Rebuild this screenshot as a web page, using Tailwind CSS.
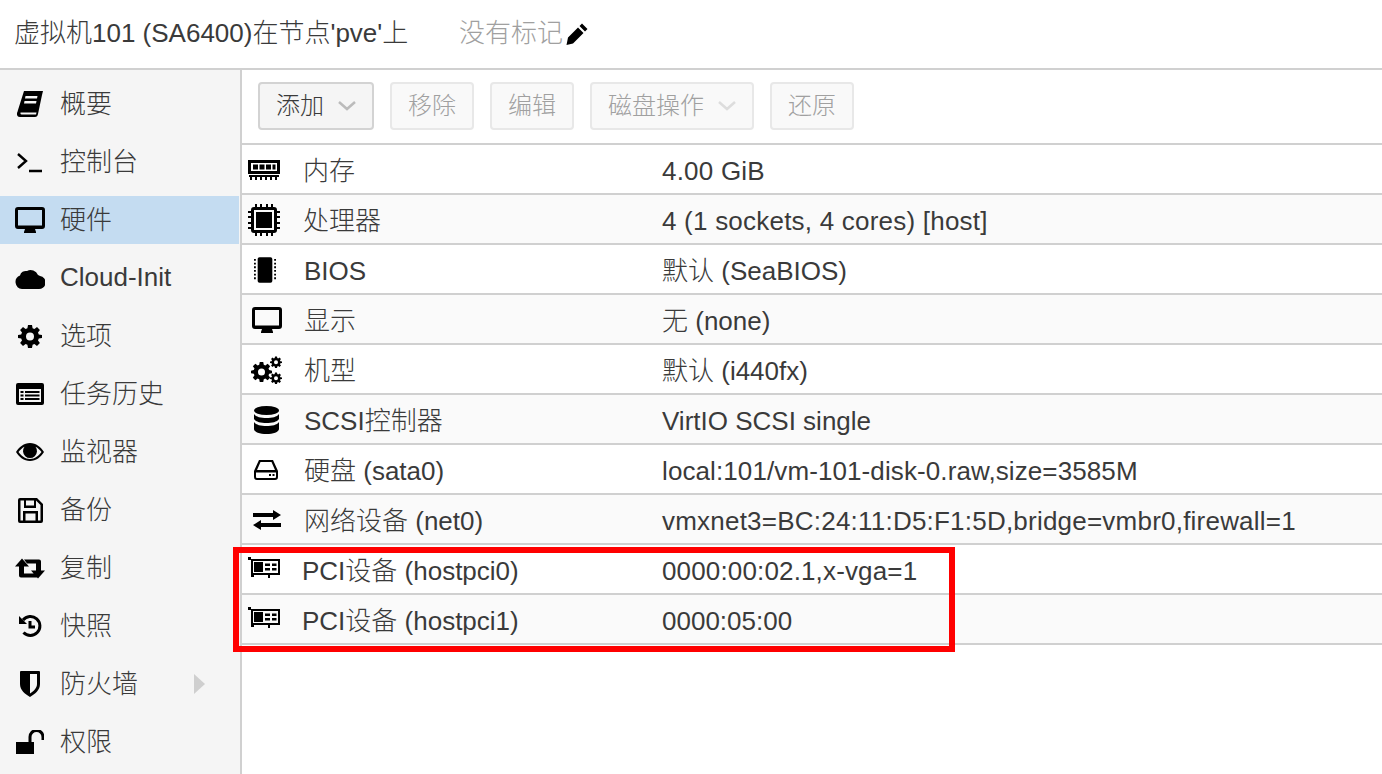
<!DOCTYPE html>
<html lang="zh-CN">
<head>
  <meta charset="UTF-8" />
  <title>虚拟机101</title>
  <script src="https://cdn.jsdelivr.net/npm/@tailwindcss/browser@4"></script>
</head>
<body class="bg-white">
  <svg class="hidden" width="0" height="0">
    <symbol id="gear" viewBox="0 0 24 24"><path fill-rule="evenodd" d="M10 1h4l.6 3.200 1.800.8L19 3.100 21.900 6 20 8.600l.8 1.800L24 11v3l-3.200.6-.8 1.800 1.900 2.600L19 21.900l-2.600-1.900-1.800.8L14 24h-4l-.6-3.200-1.800-.8L5 21.900 2.100 19 4 16.400l-.8-1.800L0 14v-3l3.200-.6.8-1.800L2.100 6 5 3.100 7.600 5l1.800-.8zM12 8.500a4 4 0 1 0 0 8 4 4 0 0 0 0-8z"/></symbol>
    <symbol id="desktop" viewBox="0 0 30 26"><path fill-rule="evenodd" d="M3 0h24a3 3 0 0 1 3 3v16a3 3 0 0 1-3 3h-7l1 3v1H9v-1l1-3H3a3 3 0 0 1-3-3V3a3 3 0 0 1 3-3zm0 3v15.500h24V3z"/></symbol>
    <symbol id="pci" viewBox="0 0 32 24"><path fill-rule="evenodd" d="M0 0h3v2h29v16H22v3h-2v-3H6v2H3V3H0zM5 4v12h25V4z"/><path d="M6 5h9v10H6zM17 6.500h5v2.500h-5zM24 6.500h4.500v2.500H24zM17 11h5v2.500h-5zM24 11h4.500v2.500H24z"/></symbol>
  </svg>

  <div class="relative h-[774px] w-[1382px] overflow-hidden font-['Liberation_Sans','Noto_Sans_CJK_SC',sans-serif] font-light text-[26px] text-[#3a3a3a]">
    <header class="flex h-[70px] items-center border-b-2 border-[#d0d0d0] pl-[14px] pb-[1px]">
      <span class="w-[445px]">虚拟机101 (SA6400)在节点'pve'上</span>
      <span class="text-[#a0a0a0]">没有标记</span>
      <svg class="ml-[2px] h-[24px] w-[24px]" viewBox="0 0 24 24"><path d="M17 1.500l5.500 5.500-2.500 2.500L14.500 4zM13 5.500L18.500 11 8 21.500 1.500 23 3 15.500z"/></svg>
    </header>

    <div class="flex h-[704px]">
      <nav class="w-[242px] shrink-0 border-r-2 border-[#d0d0d0] bg-[#f5f5f5] pt-[5px]">
        <a class="flex h-[58px] items-center">
          <span class="flex w-[60px] justify-center"><svg class="h-[28px] w-[28px]" viewBox="0 0 28 28"><path fill-rule="evenodd" d="M8 1h19l-1 4-4 19q-.5 3-3 3H4q-3.500 0-3-4 .5-1 1-3zM9.500 6l-.5 2.500h12L21.500 6zM8.500 11l-.5 2.500h12l.5-2.500zM4.500 22.500q-.5 2 1 2h14.500l.5-2z"/></svg></span>
          <span>概要</span>
        </a>
        <a class="flex h-[58px] items-center">
          <span class="flex w-[60px] justify-center"><svg class="h-[24px] w-[28px]" viewBox="0 0 28 24" fill="none" stroke="black" stroke-width="2.400"><path d="M2 4l8 7-8 7M13 21h13"/></svg></span>
          <span>控制台</span>
        </a>
        <a class="my-[5px] mr-[1px] flex h-[48px] items-center bg-[#c4dcf1]">
          <span class="flex w-[60px] justify-center"><svg class="h-[26px] w-[30px]"><use href="#desktop"/></svg></span>
          <span>硬件</span>
        </a>
        <a class="flex h-[58px] items-center">
          <span class="flex w-[60px] justify-center"><svg class="h-[24px] w-[30px]" viewBox="0 0 30 22"><path d="M7 22a7 7 0 0 1-2-13.500A6 6 0 0 1 12 4a8 8 0 0 1 11 4 6 6 0 0 1 2 1 6.500 6.500 0 0 1-2 13z"/></svg></span>
          <span class="pb-[2px]">Cloud-Init</span>
        </a>
        <a class="flex h-[58px] items-center">
          <span class="flex w-[60px] justify-center"><svg class="h-[24px] w-[24px]"><use href="#gear"/></svg></span>
          <span>选项</span>
        </a>
        <a class="flex h-[58px] items-center">
          <span class="flex w-[60px] justify-center"><svg class="h-[22px] w-[28px]" viewBox="0 0 28 22"><path fill-rule="evenodd" d="M2 0h24a2 2 0 0 1 2 2v18a2 2 0 0 1-2 2H2a2 2 0 0 1-2-2V2a2 2 0 0 1 2-2zM3 6v13h22V6z"/><path d="M4.500 8h3v2h-3zM9 8h14.500v2H9zM4.500 11.500h3v2h-3zM9 11.500h14.500v2H9zM4.500 15h3v2h-3zM9 15h14.500v2H9z"/></svg></span>
          <span>任务历史</span>
        </a>
        <a class="flex h-[58px] items-center">
          <span class="flex w-[60px] justify-center"><svg class="h-[18px] w-[28px]" viewBox="0 0 28 18"><path fill-rule="evenodd" d="M14 0c6 0 11 4 14 9-3 5-8 9-14 9S3 14 0 9c3-5 8-9 14-9zM2.500 9c2.500 3.500 6.500 7 11.500 7s9-3.500 11.500-7c-1.500-2-3.500-4-6-5.300a7 7 0 1 1-11 0C6 5 4 7 2.500 9z"/></svg></span>
          <span>监视器</span>
        </a>
        <a class="flex h-[58px] items-center">
          <span class="flex w-[60px] justify-center"><svg class="h-[25px] w-[25px]" viewBox="0 0 25 25"><path fill-rule="evenodd" d="M2 0h17l6 6v17a2 2 0 0 1-2 2H2a2 2 0 0 1-2-2V2a2 2 0 0 1 2-2zM2.500 2.500v20H5V13h15v9.500h2.500V7L18 2.500V10H6V2.500zM8 2.500v5h8v-5zM7.500 15.500v7h10v-7z"/></svg></span>
          <span>备份</span>
        </a>
        <a class="flex h-[58px] items-center">
          <span class="flex w-[60px] justify-center"><svg class="h-[23px] w-[30px]" viewBox="0 0 30 20"><path d="M7 0l7 8H9v7h10l3.500 4H6a2 2 0 0 1-2-2V8H0zM9 1h15a2 2 0 0 1 2 2v9h4l-7 8-7-8h5V5h-9z"/></svg></span>
          <span>复制</span>
        </a>
        <a class="flex h-[58px] items-center">
          <span class="flex w-[60px] justify-center"><svg class="h-[24px] w-[24px]" viewBox="0 0 24 24" fill="none" stroke="black" stroke-width="3"><path d="M5.500 18.500A9.500 9.500 0 1 0 5 6M12 7v6h5"/><path d="M1 2l8 8H1z" fill="black" stroke="none"/></svg></span>
          <span>快照</span>
        </a>
        <a class="flex h-[58px] items-center">
          <span class="flex w-[60px] justify-center"><svg class="h-[26px] w-[20px]" viewBox="0 0 20 26"><path fill-rule="evenodd" d="M1 0h18a1 1 0 0 1 1 1v12c0 6-5 10-10 13C5 23 0 19 0 13V1a1 1 0 0 1 1-1zM10 3v19.500c4-2.500 7-5.500 7-9.500V3z"/></svg></span>
          <span class="w-[133px]">防火墙</span>
          <svg class="h-[20px] w-[12px]" viewBox="0 0 12 20" fill="#cfcfcf"><path d="M1 0l11 10L1 20z"/></svg>
        </a>
        <a class="flex h-[58px] items-center">
          <span class="flex w-[60px] justify-center"><svg class="h-[24px] w-[28px]" viewBox="0 0 28 24"><path d="M0 12h18v12H0z"/><path d="M14 12V7a6.500 6.500 0 0 1 13 0v3" fill="none" stroke="black" stroke-width="3"/></svg></span>
          <span>权限</span>
        </a>
      </nav>

      <main class="flex-1">
        <div class="flex h-[75px] items-center gap-4 border-b-2 border-[#d0d0d0] pl-[16px] pb-[1px] text-[24px] text-[#a0a0a0]">
          <button class="flex h-[48px] w-[116px] items-center rounded-[4px] border-2 border-[#d3d3d3] bg-[#f5f5f5] pl-[16px] font-light text-[#3a3a3a]">添加<svg class="ml-[14px] h-[10px] w-[18px]" viewBox="0 0 18 10" fill="none" stroke="#bbb" stroke-width="2.500"><path d="M1 1l8 7 8-7"/></svg></button>
          <button class="h-[48px] w-[84px] rounded-[4px] border-2 border-[#e8e8e8] bg-[#f9f9f9] font-light">移除</button>
          <button class="h-[48px] w-[84px] rounded-[4px] border-2 border-[#e8e8e8] bg-[#f9f9f9] font-light">编辑</button>
          <button class="flex h-[48px] w-[164px] items-center rounded-[4px] border-2 border-[#e8e8e8] bg-[#f9f9f9] pl-[16px] font-light">磁盘操作<svg class="ml-[14px] h-[10px] w-[18px]" viewBox="0 0 18 10" fill="none" stroke="#ddd" stroke-width="2.500"><path d="M1 1l8 7 8-7"/></svg></button>
          <button class="h-[48px] w-[84px] rounded-[4px] border-2 border-[#e8e8e8] bg-[#f9f9f9] font-light">还原</button>
        </div>

        <div>
          <div class="grid h-[50px] grid-cols-[60px_360px_1fr] items-center border-b-2 border-[#d0d0d0] pt-[4px]">
            <span class="flex justify-center pb-[2px] pr-[16px]"><svg class="h-[20px] w-[32px]" viewBox="0 0 32 20"><path fill-rule="evenodd" d="M0 0h32v14H0zM3 3v8h26V3z"/><path d="M5 4.500h5v5H5zM11.500 4.500h5v5h-5zM18 4.500h5v5h-5zM24.500 4.500h3v5h-3zM1 15h30v2H1z"/><path d="M2 17h2v3H2zM7 17h2v3H7zM12 17h2v3h-2zM17 17h2v3h-2zM22 17h2v3h-2zM27 17h2v3h-2z"/></svg></span>
            <span class="pl-[1px]">内存</span><span class="tracking-[0.22px]">4.00 GiB</span>
          </div>
          <div class="grid h-[50px] grid-cols-[60px_360px_1fr] items-center border-b-2 border-[#d0d0d0] bg-[#fafafa] pt-[4px]">
            <span class="flex justify-center pb-[2px] pr-[16px]"><svg class="h-[32px] w-[32px]" viewBox="0 0 32 32"><path fill-rule="evenodd" d="M6 3h20a3 3 0 0 1 3 3v20a3 3 0 0 1-3 3H6a3 3 0 0 1-3-3V6a3 3 0 0 1 3-3zM6 6v20h20V6z"/><path d="M8 8h16v16H8zM7 0h2v3H7zM12 0h2v3h-2zM18 0h2v3h-2zM23 0h2v3h-2zM7 29h2v3H7zM12 29h2v3h-2zM18 29h2v3h-2zM23 29h2v3h-2zM0 7h3v2H0zM0 12h3v2H0zM0 18h3v2H0zM0 23h3v2H0zM29 7h3v2h-3zM29 12h3v2h-3zM29 18h3v2h-3zM29 23h3v2h-3z"/></svg></span>
            <span class="pl-[1px]">处理器</span><span class="tracking-[0.22px]">4 (1 sockets, 4 cores) [host]</span>
          </div>
          <div class="grid h-[50px] grid-cols-[60px_360px_1fr] items-center border-b-2 border-[#d0d0d0] pt-[4px]">
            <span class="flex justify-center pb-[2px] pr-[15px]"><svg class="h-[28px] w-[22px]" viewBox="0 0 24 28"><rect x="4" width="16" height="28" rx="2"/><path d="M0 2h2v2H0zM0 6h2v2H0zM0 10h2v2H0zM0 14h2v2H0zM0 18h2v2H0zM0 22h2v2H0zM22 2h2v2h-2zM22 6h2v2h-2zM22 10h2v2h-2zM22 14h2v2h-2zM22 18h2v2h-2zM22 22h2v2h-2z"/></svg></span>
            <span class="pl-[2px]">BIOS</span><span>默认 (SeaBIOS)</span>
          </div>
          <div class="grid h-[50px] grid-cols-[60px_360px_1fr] items-center border-b-2 border-[#d0d0d0] bg-[#fafafa] pt-[4px]">
            <span class="flex justify-center pb-[2px] pr-[10px]"><svg class="h-[26px] w-[30px]"><use href="#desktop"/></svg></span>
            <span class="pl-[2px]">显示</span><span>无 (none)</span>
          </div>
          <div class="grid h-[50px] grid-cols-[60px_360px_1fr] items-center border-b-2 border-[#d0d0d0] pt-[4px]">
            <span class="flex justify-center pb-[2px] pr-[11px]"><span class="relative h-[28px] w-[31px]"><svg class="absolute left-0 top-[5px] h-[21px] w-[21px]"><use href="#gear"/></svg><svg class="absolute right-0 top-0 h-[12px] w-[12px]"><use href="#gear"/></svg><svg class="absolute right-0 bottom-0 h-[12px] w-[12px]"><use href="#gear"/></svg></span></span>
            <span class="pl-[2px]">机型</span><span>默认 (i440fx)</span>
          </div>
          <div class="grid h-[50px] grid-cols-[60px_360px_1fr] items-center border-b-2 border-[#d0d0d0] bg-[#fafafa] pt-[4px]">
            <span class="flex justify-center pb-[2px] pr-[11px]"><svg class="h-[28px] w-[25px]" viewBox="0 0 25 28"><ellipse cx="12.500" cy="4.500" rx="12.500" ry="4.500"/><path d="M0 8c2 3 7 4 12.500 4S23 11 25 8v5c-2 3-7 4-12.500 4S2 16 0 13zM0 16c2 3 7 4 12.500 4S23 19 25 16v7c0 3-6 5-12.500 5S0 26 0 23z"/></svg></span>
            <span class="pl-[2px]">SCSI控制器</span><span>VirtIO SCSI single</span>
          </div>
          <div class="grid h-[50px] grid-cols-[60px_360px_1fr] items-center border-b-2 border-[#d0d0d0] pt-[4px]">
            <span class="flex justify-center pb-[2px] pr-[12px]"><svg class="h-[20px] w-[24px]" viewBox="0 0 24 20"><path fill-rule="evenodd" d="M5 0h14l5 11v6a3 3 0 0 1-3 3H3a3 3 0 0 1-3-3v-6zM6.500 2L3 10h18l-3.500-8zM2 12.500V17a1 1 0 0 0 1 1h18a1 1 0 0 0 1-1v-4.500z"/><path d="M15 14h2v2h-2zM18.500 14h2v2h-2z"/></svg></span>
            <span class="pl-[2px]">硬盘 (sata0)</span><span class="tracking-[0.1px]">local:101/vm-101-disk-0.raw,size=3585M</span>
          </div>
          <div class="grid h-[50px] grid-cols-[60px_360px_1fr] items-center border-b-2 border-[#d0d0d0] bg-[#fafafa] pt-[4px]">
            <span class="flex justify-center pb-[2px] pr-[11px]"><svg class="h-[20px] w-[28px]" viewBox="0 0 28 20"><path d="M20 0l8 5-8 5V7H0V3h20zM8 10v3h20v4H8v3l-8-5z"/></svg></span>
            <span class="pl-[2px]">网络设备 (net0)</span><span class="tracking-[0.22px]">vmxnet3=BC:24:11:D5:F1:5D,bridge=vmbr0,firewall=1</span>
          </div>
          <div class="grid h-[50px] grid-cols-[60px_360px_1fr] items-center border-b-2 border-[#d0d0d0] pt-[4px]">
            <span class="flex justify-center pb-[4px] pr-[16px]"><svg class="h-[24px] w-[32px]"><use href="#pci"/></svg></span>
            <span>PCI设备 (hostpci0)</span><span class="tracking-[0.15px]">0000:00:02.1,x-vga=1</span>
          </div>
          <div class="grid h-[50px] grid-cols-[60px_360px_1fr] items-center border-b-2 border-[#d0d0d0] bg-[#fafafa] pt-[4px]">
            <span class="flex justify-center pb-[4px] pr-[16px]"><svg class="h-[24px] w-[32px]"><use href="#pci"/></svg></span>
            <span>PCI设备 (hostpci1)</span><span>0000:05:00</span>
          </div>
        </div>
      </main>
    </div>

    <div class="absolute left-[233px] top-[547px] h-[105px] w-[722px] border-[6px] border-[#f00]"></div>
  </div>
</body>
</html>
